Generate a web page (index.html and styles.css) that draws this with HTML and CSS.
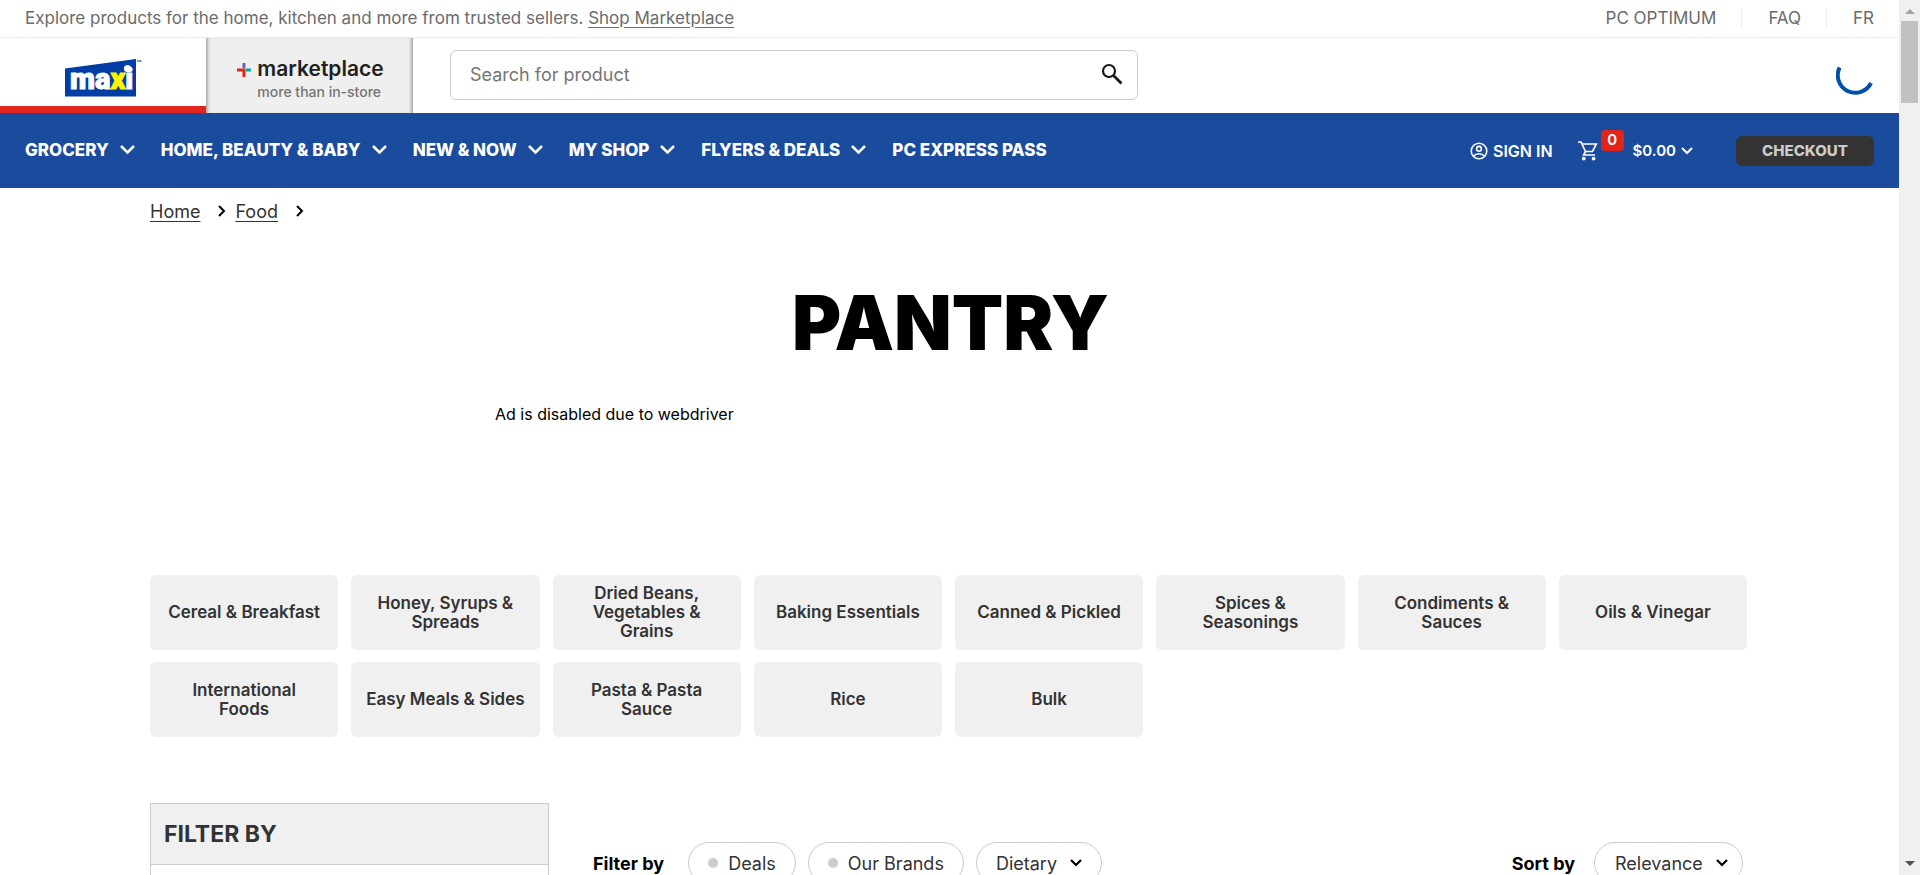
FILE: index.html
```html
<!DOCTYPE html>
<html lang="en">
<head>
<meta charset="utf-8">
<title>Pantry | Maxi</title>
<link rel="stylesheet" href="styles.css">
</head>
<body>
<div class="page">
  <div class="topbar">
    <p class="promo">Explore products for the home, kitchen and more from trusted sellers. <a href="#">Shop Marketplace</a></p>
    <nav class="utility" aria-label="Utility">
      <a href="#">PC OPTIMUM</a>
      <a href="#">FAQ</a>
      <a href="#">FR</a>
    </nav>
  </div>
  <header class="header">
    <a class="tab tab-maxi" href="#" aria-label="Maxi">
      <svg class="maxi-logo" width="78" height="38" viewBox="0 0 78 38">
        <path d="M0 9.500 71 0V37.500H0Z" fill="#003da5"/>
        <text class="maxi-word" x="5" y="30" fill="#fff" stroke="#fff">ma<tspan fill="#fff200" stroke="#fff200">x</tspan>i</text>
        <circle cx="62.500" cy="9.500" r="3.600" fill="#fff"/>
        <path d="M72.500 3V1L73.500 2.500 74.500 1V3M75.500 1V3Q77.500 2 75.500 1" fill="none" stroke="#003da5" stroke-width=".5"/>
      </svg>
    </a>
    <a class="tab tab-market" href="#">
      <svg class="plus" width="14" height="14" viewBox="0 0 14 14" fill="none" stroke-width="3">
        <path d="M7 0V5" stroke="#6a5acd"/><path d="M9 7H14" stroke="#00a99d"/><path d="M0 7H7V14" stroke="#e1251b"/>
      </svg>
      <span class="market-text"><span class="market-name">marketplace</span><span class="market-tag">more than in-store</span></span>
    </a>
    <form class="search">
      <input type="search" placeholder="Search for product" aria-label="Search for product">
      <button type="button" aria-label="Search">
        <svg width="22" height="22" viewBox="0 0 22 22" fill="none" stroke="#1a1a1a" stroke-width="2.200"><circle cx="8" cy="8" r="6"/><path d="M12.500 12.500 20.500 20.500" stroke-width="2.800"/></svg>
      </button>
    </form>
    <svg class="spinner" width="38" height="38" viewBox="0 0 38 38" fill="none" stroke="#0050aa" stroke-width="4"><path d="M3.600 10.500A17 17 0 1 0 35 26"/></svg>
  </header>
  <div class="navbar">
    <nav class="menu" aria-label="Main">
      <button type="button">GROCERY<svg width="15" height="9" viewBox="0 0 15 9"><path d="M1 1 7.500 7.500 14 1"/></svg></button>
      <button type="button">HOME, BEAUTY &amp; BABY<svg width="15" height="9" viewBox="0 0 15 9"><path d="M1 1 7.500 7.500 14 1"/></svg></button>
      <button type="button">NEW &amp; NOW<svg width="15" height="9" viewBox="0 0 15 9"><path d="M1 1 7.500 7.500 14 1"/></svg></button>
      <button type="button">MY SHOP<svg width="15" height="9" viewBox="0 0 15 9"><path d="M1 1 7.500 7.500 14 1"/></svg></button>
      <button type="button">FLYERS &amp; DEALS<svg width="15" height="9" viewBox="0 0 15 9"><path d="M1 1 7.500 7.500 14 1"/></svg></button>
      <a href="#">PC EXPRESS PASS</a>
    </nav>
    <div class="account">
      <a class="signin" href="#">
        <svg width="18" height="18" viewBox="0 0 18 18" fill="none" stroke="#fff" stroke-width="1.600"><circle cx="9" cy="9" r="7.800"/><circle cx="9" cy="6.800" r="2.400"/><path d="M3.500 14C5 12.200 7 11.700 9 11.700S13 12.200 14.500 14"/></svg>
        SIGN IN
      </a>
      <button class="cart" type="button">
        <svg width="20" height="20" viewBox="0 0 20 20" fill="none" stroke="#fff" stroke-width="1.700"><path d="M0 1H3L7.500 10.500H14.500L18.300 3H4M7.500 10.500 5.700 14H17"/><circle cx="5.800" cy="17.600" r="1.900" fill="#fff" stroke="none"/><circle cx="15.600" cy="17.600" r="1.900" fill="#fff" stroke="none"/></svg>
        <span class="badge">0</span>
        <span class="total">$0.00</span>
        <svg width="12" height="8" viewBox="0 0 12 8" fill="none" stroke="#fff" stroke-width="2"><path d="M1 1 6 6 11 1"/></svg>
      </button>
      <button class="checkout" type="button">CHECKOUT</button>
    </div>
  </div>
  <main class="main">
    <nav class="crumbs" aria-label="Breadcrumb">
      <a href="#">Home</a>
      <svg width="8" height="12" viewBox="0 0 8 12"><path d="M1 1 6 6 1 11"/></svg>
      <a href="#">Food</a>
      <svg width="8" height="12" viewBox="0 0 8 12"><path d="M1 1 6 6 1 11"/></svg>
    </nav>
    <h1>PANTRY</h1>
    <div class="ad">Ad is disabled due to webdriver</div>
    <div class="tiles">
      <a href="#">Cereal &amp; Breakfast</a>
      <a href="#">Honey, Syrups &amp; Spreads</a>
      <a href="#">Dried Beans, Vegetables &amp; Grains</a>
      <a href="#">Baking Essentials</a>
      <a href="#">Canned &amp; Pickled</a>
      <a href="#">Spices &amp; Seasonings</a>
      <a href="#">Condiments &amp; Sauces</a>
      <a href="#">Oils &amp; Vinegar</a>
      <a href="#">International<br>Foods</a>
      <a href="#">Easy Meals &amp; Sides</a>
      <a href="#">Pasta &amp; Pasta Sauce</a>
      <a href="#">Rice</a>
      <a href="#">Bulk</a>
    </div>
    <div class="listing">
      <aside class="filters"><h2>FILTER BY</h2></aside>
      <div class="controls">
        <span class="label">Filter by</span>
        <button class="pill" type="button"><i class="dot"></i>Deals</button>
        <button class="pill" type="button"><i class="dot"></i>Our Brands</button>
        <button class="pill" type="button">Dietary<svg width="12" height="8" viewBox="0 0 12 8"><path d="M1 1 6 6 11 1"/></svg></button>
        <label class="label sort" for="sort">Sort by</label>
        <span class="pill pill-select">
          <select id="sort"><option>Relevance</option></select>
          <svg width="12" height="8" viewBox="0 0 12 8"><path d="M1 1 6 6 11 1"/></svg>
        </span>
      </div>
    </div>
  </main>
</div>
<div class="scrollbar" aria-hidden="true">
  <svg width="10" height="5" viewBox="0 0 10 5"><path d="M5 0 10 5H0Z" fill="#a3a3a3"/></svg>
  <div class="thumb"></div>
  <svg class="down" width="10" height="5" viewBox="0 0 10 5"><path d="M0 0H10L5 5Z" fill="#505050"/></svg>
</div>
</body>
</html>
```
FILE: styles.css
```css
* { box-sizing: border-box; }
body {
  margin: 0;
  display: flex;
  height: 100vh;
  overflow: hidden;
  background: #fff;
  color: #333;
  font-family: Inter, "Liberation Sans", sans-serif;
  font-size: 17px;
}
h1, h2, p { margin: 0; }
a { color: inherit; text-decoration: none; }
button { font: inherit; color: inherit; background: none; border: 0; padding: 0; }
svg { flex: none; }

.page { flex: 1; min-width: 0; overflow: hidden; }

.topbar {
  display: flex;
  justify-content: space-between;
  align-items: center;
  height: 38px;
  padding: 0 25px 2px;
  border-bottom: 1px solid #ededed;
  color: #6b6b6b;
  line-height: 18px;
}
.promo a { text-decoration: underline; text-underline-offset: 3px; }
.utility { display: flex; align-items: center; }
.utility a + a { margin-left: 25px; padding-left: 26px; border-left: 1px solid #ededed; }

.header { display: flex; align-items: center; height: 75px; padding-right: 25px; }
.tab { display: flex; justify-content: center; align-self: stretch; }
.tab-maxi { width: 206px; padding: 21px 0 0 2px; border-bottom: 7px solid #e1251b; }
.maxi-logo { display: block; overflow: visible; }
.maxi-word { font-family: Roboto, sans-serif; font-weight: 900; font-size: 29px; stroke-width: 1; }
.tab-market {
  width: 207px;
  padding: 20px 0 0 2px;
  gap: 6px;
  background: #efefef;
  box-shadow: inset 4px 0 3px -2px #aaa, inset -4px 0 3px -2px #aaa;
}
.plus { margin-top: 5px; }
.market-text { display: flex; flex-direction: column; }
.market-name { font-size: 21px; line-height: 22px; font-weight: 600; color: #231f20; }
.market-tag { font-size: 14px; line-height: 24px; font-weight: 500; color: #737373; }
.search {
  display: flex;
  align-items: center;
  align-self: flex-start;
  width: 688px;
  height: 50px;
  margin: 12px 0 0 37px;
  padding: 0 14px 2px 19px;
  border: 1px solid #ccc;
  border-radius: 6px;
}
.search input { flex: 1; min-width: 0; border: 0; padding: 0; outline: 0; background: none; font: inherit; font-size: 18px; }
.search input::placeholder { color: #757575; opacity: 1; }
.search button, .search svg { display: block; }
.spinner { margin-left: auto; }

.navbar {
  display: flex;
  justify-content: space-between;
  align-items: center;
  height: 75px;
  padding: 0 25px;
  background: #1a4b9d;
  color: #fff;
}
.menu { display: flex; align-items: center; gap: 26px; padding-bottom: 2px; font-weight: 800; }
.menu button { display: flex; align-items: center; gap: 11px; }
.menu path { fill: none; stroke: #fff; stroke-width: 2.5; }
.account { display: flex; align-items: center; font-size: 16px; font-weight: 600; }
.signin, .cart { display: flex; align-items: center; }
.signin { gap: 5px; }
.cart { margin-left: 25px; font-size: 15px; }
.badge {
  align-self: flex-start;
  width: 23px;
  height: 21px;
  margin: 0 9px 20px 3px;
  border-radius: 4px;
  background: #e1251b;
  line-height: 20px;
}
.total { margin-right: 5px; }
.checkout {
  width: 138px;
  height: 30px;
  margin-left: 43px;
  padding-bottom: 1px;
  border-radius: 6px;
  background: #333;
  color: #ccc;
  font-size: 15px;
  font-weight: 800;
}

.main { padding: 0 152px 0 150px; }
.crumbs { display: flex; align-items: center; height: 46px; font-size: 18px; }
.crumbs a { text-decoration: underline; text-underline-offset: 3px; }
.crumbs svg { margin: 0 9px 0 18px; }
.crumbs path { fill: none; stroke: #000; stroke-width: 2; }
h1 { margin-top: 45px; padding-left: 4px; font-size: 75px; line-height: 88px; font-weight: 900; text-align: center; color: #000; }
.ad { height: 170px; margin: 38px 0 0 345px; font-size: 16px; line-height: 18px; color: #000; }
.tiles { display: grid; grid-template-columns: repeat(8, 1fr); gap: 12px 13px; }
.tiles a {
  display: flex;
  align-items: center;
  justify-content: center;
  height: 75px;
  padding: 0 14px;
  border-radius: 6px;
  background: #f0f0f0;
  font-weight: 600;
  line-height: 19px;
  text-align: center;
}
.listing { display: flex; gap: 44px; margin-top: 66px; }
.filters { width: 399px; height: 400px; border: 1px solid #ccc; }
.filters h2 { padding: 0 13px; border-bottom: 1px solid #ccc; background: #f0f0f0; font-size: 23px; line-height: 60px; font-weight: 700; }
.controls { flex: 1; display: flex; align-items: center; align-self: flex-start; gap: 12px; margin-top: 39px; padding-right: 4px; font-size: 18px; }
.label { margin-right: 12px; font-weight: 700; color: #000; }
.sort { margin: 0 7px 0 auto; }
.pill { display: flex; align-items: center; height: 42px; padding: 0 19px; border: 1px solid #ccc; border-radius: 21px; }
.pill path { fill: none; stroke: #000; stroke-width: 2.2; }
.pill svg { margin-left: 13px; }
.dot { width: 10px; height: 10px; margin-right: 10px; border-radius: 50%; background: #ccc; }
.pill-select { padding: 0 14px 0 20px; }
.pill select { appearance: none; border: 0; padding: 0; background: none; font: inherit; color: inherit; }

.scrollbar { display: flex; flex-direction: column; align-items: center; width: 21px; padding: 9px 0; background: #f0f0f0; }
.thumb { width: 17px; height: 82px; margin-top: 7px; background: #c1c1c1; }
.down { margin-top: auto; }
```
